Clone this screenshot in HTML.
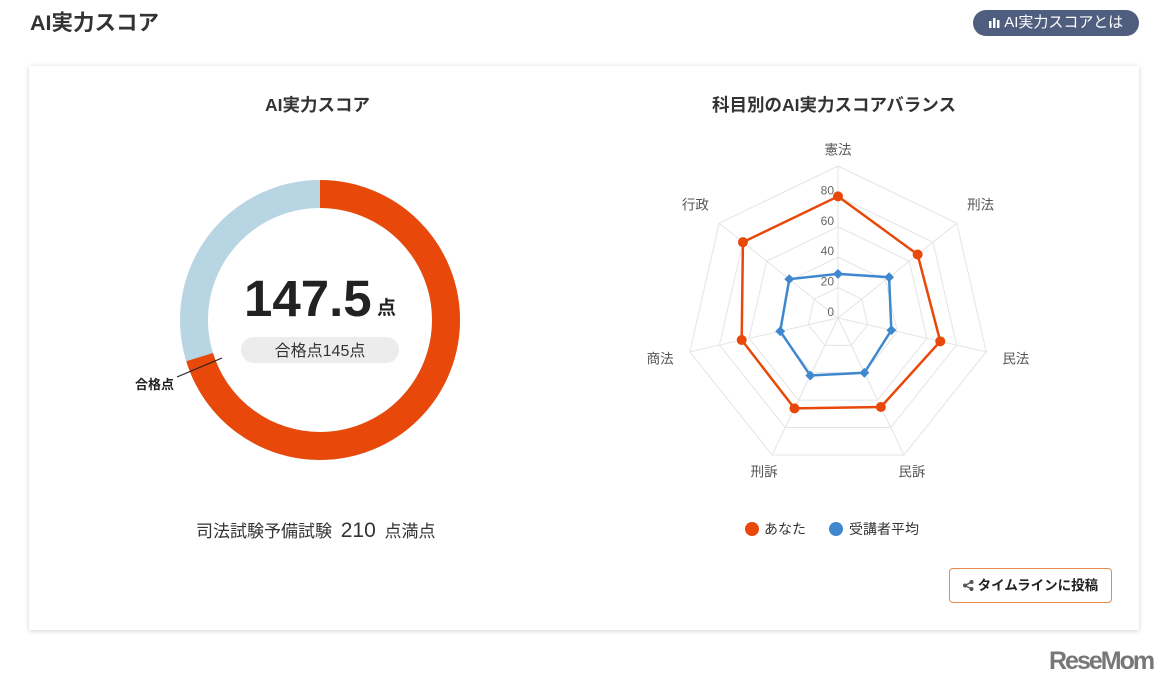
<!DOCTYPE html>
<html><head><meta charset="utf-8"><style>
body{margin:0;width:1165px;height:688px;background:#fff;font-family:"Liberation Sans","Noto Sans CJK JP",sans-serif;position:relative;overflow:hidden;color:#222}
.t{position:absolute;left:30px;top:6px;font-size:21.5px;font-weight:bold;color:#333}
.pill{position:absolute;left:973px;top:10px;width:166px;height:26px;border-radius:13px;background:#4f5d7e;color:#fff;font-size:15px;line-height:26px;text-align:center}
.card{position:absolute;left:29px;top:66px;width:1110px;height:564px;background:#fff;box-shadow:0 1px 5px rgba(0,0,0,.18)}
.h{position:absolute;font-size:17.5px;font-weight:bold;color:#333;top:26px}
.btn{position:absolute;left:920px;top:502px;width:163px;height:35px;border:1.5px solid #e58a4e;border-radius:4px;font-size:13.5px;font-weight:bold;line-height:33px;text-align:center;box-sizing:border-box}
.logo{position:absolute;left:1049px;top:647px;font-size:25px;font-weight:bold;color:#777;letter-spacing:-2px}
</style></head><body>
<div class="t">AI実力スコア</div>
<div class="pill"><svg width="12" height="11" style="vertical-align:-1px"><rect x="0" y="4" width="2.5" height="7" fill="#fff"/><rect x="4" y="1" width="2.5" height="10" fill="#fff"/><rect x="8" y="3" width="2.5" height="8" fill="#fff"/></svg> AI実力スコアとは</div>
<div class="card">
<div class="h" style="left:236px">AI実力スコア</div>
<div class="h" style="left:683px">科目別のAI実力スコアバランス</div>
<div style="position:absolute;left:167px;top:451px;font-size:17px;color:#333">司法試験予備試験 <span style="font-size:21px;margin:0 4px">210</span> 点満点</div>
<div class="btn"><svg width="11" height="11" style="vertical-align:-1px"><circle cx="8.5" cy="2" r="2" fill="#555"/><circle cx="8.5" cy="9" r="2" fill="#555"/><circle cx="2" cy="5.5" r="2" fill="#555"/><path d="M8.5 2L2 5.5L8.5 9" stroke="#555" stroke-width="1.3" fill="none"/></svg> タイムラインに投稿</div>
</div>
<svg id="s" width="1165" height="688" style="position:absolute;left:0;top:0" font-family="Liberation Sans,Noto Sans CJK JP,sans-serif">
<circle cx="320" cy="320" r="126" fill="none" stroke="#b7d5e2" stroke-width="28"/>
<circle cx="320" cy="320" r="126" fill="none" stroke="#e8490a" stroke-width="28" stroke-dasharray="555.8 1000" transform="rotate(-90 320 320)"/>
<line x1="222" y1="358" x2="177" y2="377" stroke="#222" stroke-width="1.2"/>
<text x="135" y="389" font-size="13" font-weight="bold" fill="#222">合格点</text>
<text x="244" y="316" font-size="51" font-weight="bold" fill="#222">147.5</text>
<text x="377" y="314" font-size="19" font-weight="bold" fill="#222">点</text>
<rect x="241" y="337" width="158" height="26" rx="13" fill="#ececec"/>
<text x="320" y="356" font-size="16" fill="#333" text-anchor="middle">合格点145点</text>
<g id="r"></g>
<circle cx="752" cy="529" r="7" fill="#e8490a"/><text x="764" y="534" font-size="14" fill="#333">あなた</text>
<circle cx="836" cy="529" r="7" fill="#3f88cf"/><text x="849" y="534" font-size="14" fill="#333">受講者平均</text>
</svg>
<div class="logo">ReseMom</div>
<script>
var cx=838,cy=318,R=152,g='';
function p(i,v){var a=-Math.PI/2+i*2*Math.PI/7,r=R*v/100;return [cx+r*Math.cos(a),cy+r*Math.sin(a)];}
for(var l=20;l<=100;l+=20){var pts=[];for(var i=0;i<7;i++)pts.push(p(i,l).join(','));g+='<polygon points="'+pts.join(' ')+'" fill="none" stroke="#e4e4e4"/>';}
for(var i=0;i<7;i++){var q=p(i,100);g+='<line x1="'+cx+'" y1="'+cy+'" x2="'+q[0]+'" y2="'+q[1]+'" stroke="#e4e4e4"/>';}
[0,20,40,60,80].forEach(function(v){g+='<text x="'+(cx-4)+'" y="'+(cy-v*1.52-2)+'" font-size="12" fill="#666" text-anchor="end">'+v+'</text>';});
var labs=['憲法','刑法','民法','民訴','刑訴','商法','行政'];
var rr=[111,120,120,112,112,120,120];
for(var i=0;i<7;i++){var q=p(i,rr[i]);g+='<text x="'+q[0]+'" y="'+(q[1]+5)+'" font-size="13.5" fill="#555" text-anchor="middle">'+labs[i]+'</text>';}
function series(vals,c,rad,dia){var pts=vals.map(function(v,i){return p(i,v);});g+='<polygon points="'+pts.map(function(x){return x.join(',')}).join(' ')+'" fill="none" stroke="'+c+'" stroke-width="2.5"/>';pts.forEach(function(x){if(dia)g+='<rect x="'+(x[0]-3.5)+'" y="'+(x[1]-3.5)+'" width="7" height="7" fill="'+c+'" transform="rotate(45 '+x[0]+' '+x[1]+')"/>';else g+='<circle cx="'+x[0]+'" cy="'+x[1]+'" r="'+rad+'" fill="'+c+'"/>';});}
series([80,67,69,65,66,65,80],'#e8490a',5,false);
series([29,43,36,40,42,39,41],'#3f88cf',0,true);
document.getElementById('r').innerHTML=g;
</script>
</body></html>
